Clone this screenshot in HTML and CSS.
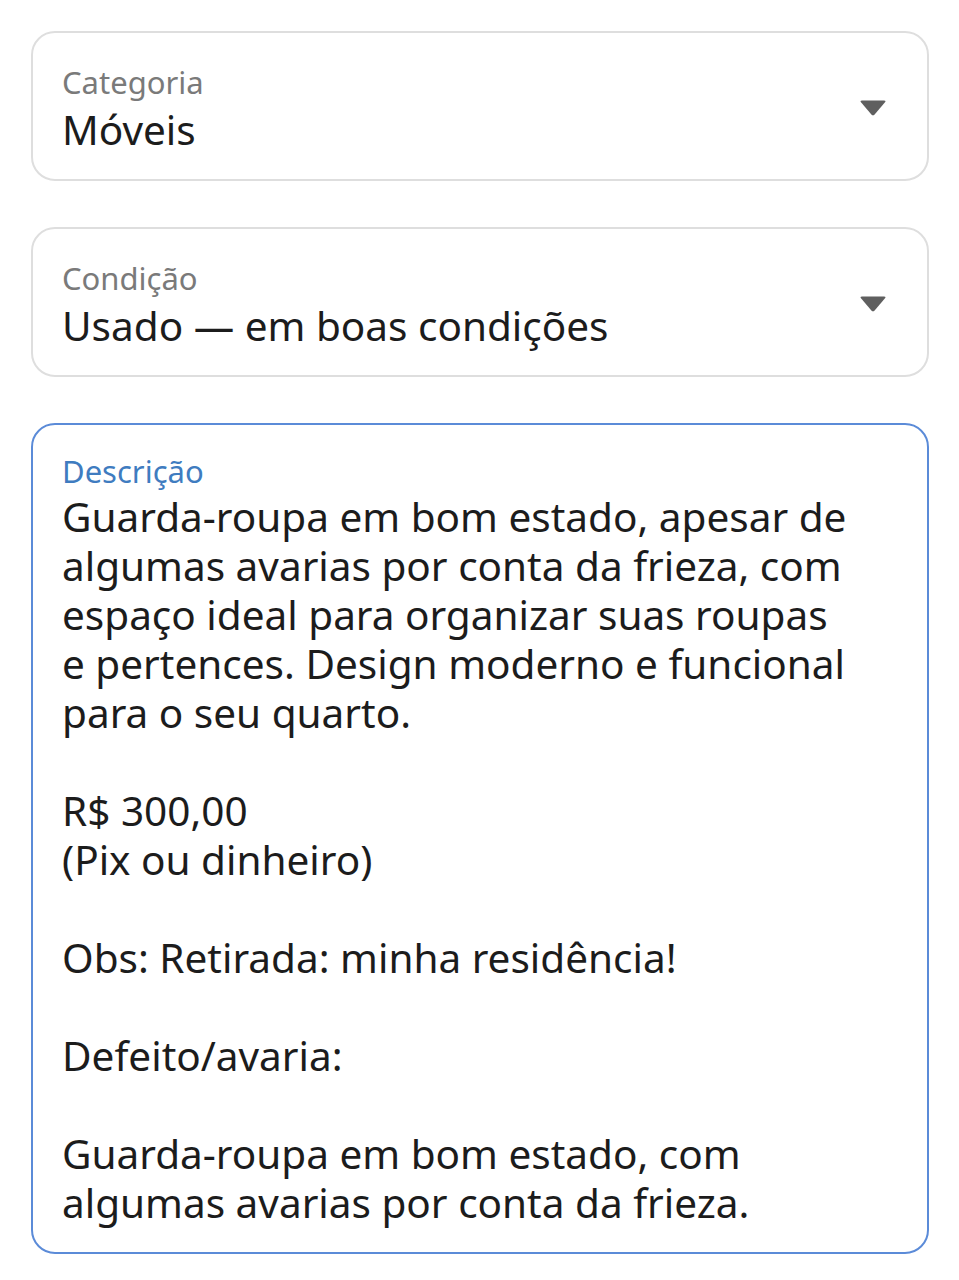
FILE: index.html
```html
<!DOCTYPE html>
<html lang="pt-BR">
<head>
<meta charset="utf-8">
<title>Anúncio</title>
<link rel="stylesheet" href="styles.css">
</head>
<body>
<main class="form">
  <div class="field select">
    <div class="field-text">
      <div class="label">Categoria</div>
      <div class="value">Móveis</div>
    </div>
    <svg class="caret" width="28" height="18" viewBox="0 0 28 18"><path d="M3 1.5 H25 Q27.5 1.5 25.8 3.6 L15.6 15.4 Q14 17.2 12.4 15.4 L2.2 3.6 Q0.5 1.5 3 1.5 Z" fill="#5f5f5f"/></svg>
  </div>
  <div class="field select">
    <div class="field-text">
      <div class="label">Condição</div>
      <div class="value">Usado — em boas condições</div>
    </div>
    <svg class="caret" width="28" height="18" viewBox="0 0 28 18"><path d="M3 1.5 H25 Q27.5 1.5 25.8 3.6 L15.6 15.4 Q14 17.2 12.4 15.4 L2.2 3.6 Q0.5 1.5 3 1.5 Z" fill="#5f5f5f"/></svg>
  </div>
  <div class="field textarea focused">
    <div class="label">Descrição</div>
    <div class="desc">Guarda-roupa em bom estado, apesar de
algumas avarias por conta da frieza, com
espaço ideal para organizar suas roupas
e pertences. Design moderno e funcional
para o seu quarto.

R$ 300,00
(Pix ou dinheiro)

Obs: Retirada: minha residência!

Defeito/avaria:

Guarda-roupa em bom estado, com
algumas avarias por conta da frieza.</div>
  </div>
</main>
</body>
</html>
```
FILE: styles.css
```css
html, body {
  margin: 0;
  padding: 0;
  background: #ffffff;
}
body {
  font-family: "Noto Sans", "Open Sans", Roboto, sans-serif;
  color: #1c1c1c;
}
.form {
  padding: 31px 30px 0 31px;
  display: flex;
  flex-direction: column;
  gap: 46px;
}
.field {
  box-sizing: border-box;
  border: 2px solid #dedede;
  border-radius: 24px;
  background: #fff;
  padding: 0 0 0 29px;
}
.select {
  height: 150px;
  display: flex;
  align-items: center;
  justify-content: space-between;
  padding-right: 40px;
}
.field-text {
  margin-top: 6px;
}
.caret {
  display: block;
  margin-top: 4px;
}
.label {
  font-size: 31px;
  line-height: 42px;
  color: #7a7a7a;
}
.value {
  font-size: 40.5px;
  line-height: 54px;
  color: #1c1c1c;
}
.textarea {
  border-color: #5b8bd8;
  padding-top: 25px;
  padding-bottom: 30px;
  height: 831px;
}
.focused .label {
  color: #3f7cc0;
}
.desc {
  font-size: 40.5px;
  line-height: 49px;
  white-space: pre-line;
  color: #1c1c1c;
}
```
